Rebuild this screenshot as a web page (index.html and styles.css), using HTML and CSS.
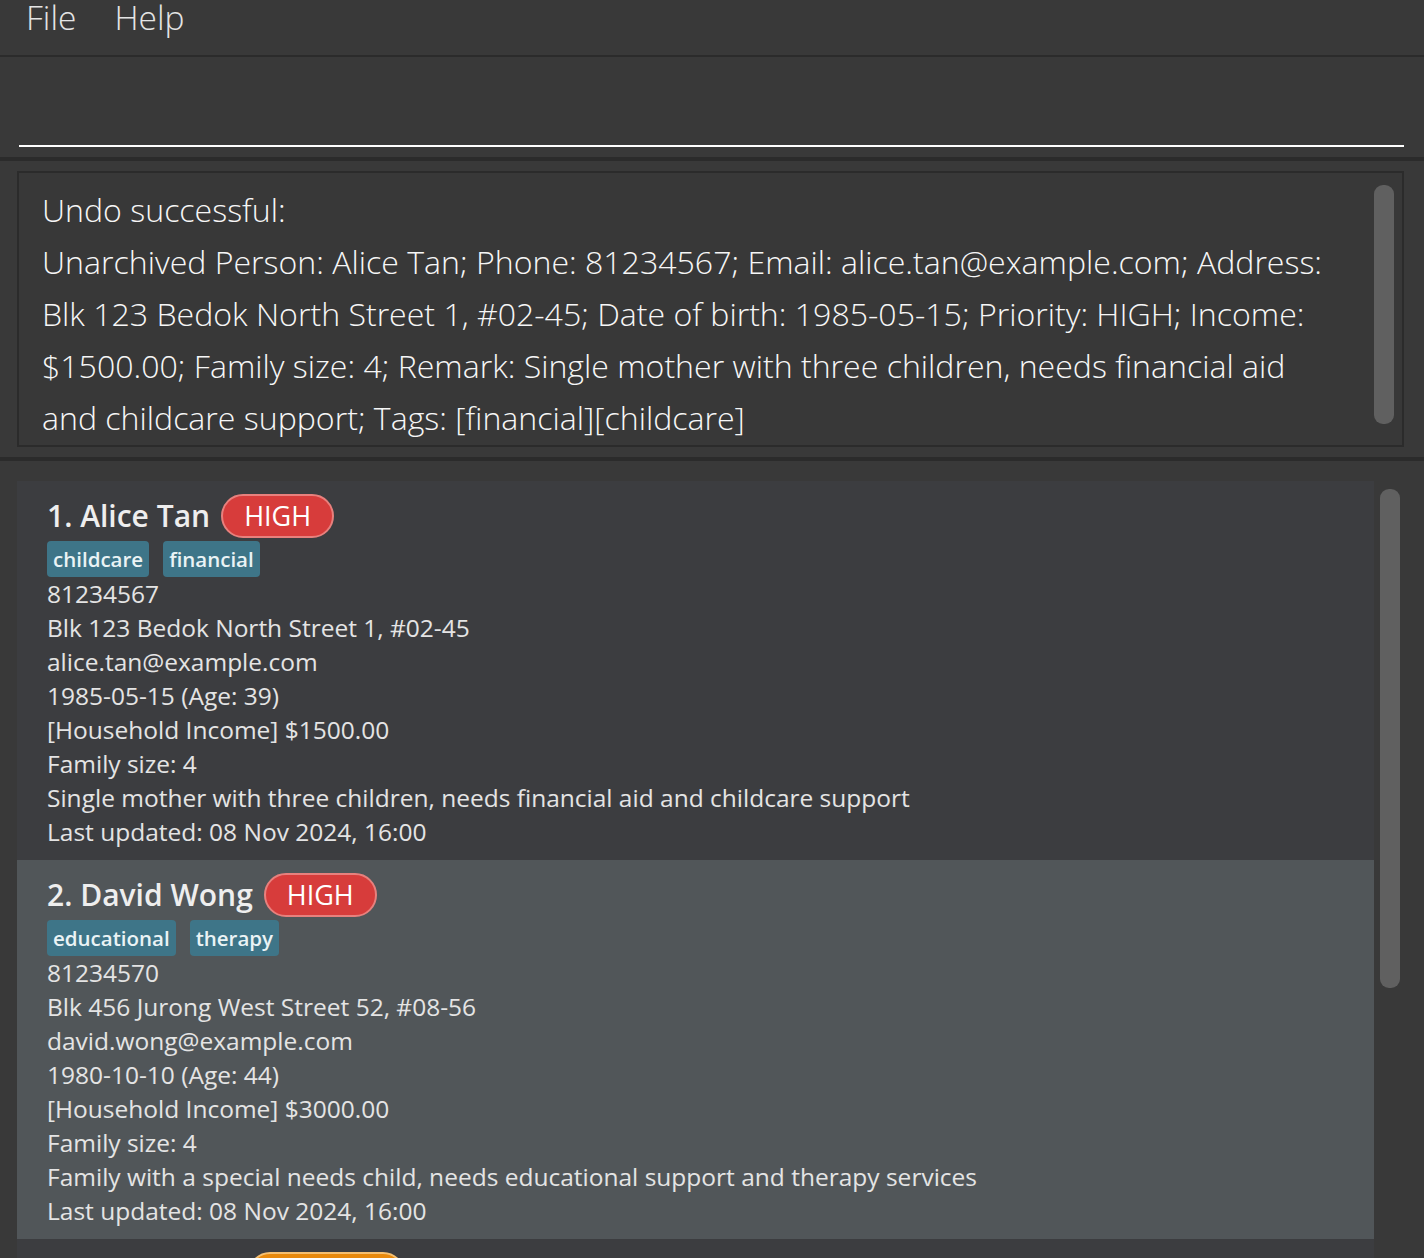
FILE: index.html
```html
<!DOCTYPE html>
<html lang="en">
<head>
<meta charset="utf-8">
<title>Address Book</title>
<link rel="stylesheet" href="styles.css">
</head>
<body>
<div class="app">
  <nav class="menubar">
    <span class="menu-item menu-file">File</span>
    <span class="menu-item">Help</span>
  </nav>
  <div class="sep sep-thin"></div>
  <section class="command">
    <div class="command-input"></div>
  </section>
  <div class="sep"></div>
  <section class="result">
    <div class="result-box">
      <div class="result-text">Undo successful:<br>Unarchived Person: Alice Tan; Phone: 81234567; Email: alice.tan@example.com; Address:<br>Blk 123 Bedok North Street 1, #02-45; Date of birth: 1985-05-15; Priority: HIGH; Income:<br>$1500.00; Family size: 4; Remark: Single mother with three children, needs financial aid<br>and childcare support; Tags: [financial][childcare]</div>
      <div class="thumb result-thumb"></div>
    </div>
  </section>
  <div class="sep"></div>
  <section class="list">
    <div class="cards">
      <article class="card card-odd">
        <div class="card-title">
          <span class="name">1. Alice Tan</span>
          <span class="badge badge-high">HIGH</span>
        </div>
        <div class="tags">
          <span class="tag">childcare</span>
          <span class="tag">financial</span>
        </div>
        <div class="line">81234567</div>
        <div class="line">Blk 123 Bedok North Street 1, #02-45</div>
        <div class="line">alice.tan@example.com</div>
        <div class="line">1985-05-15 (Age: 39)</div>
        <div class="line">[Household Income] $1500.00</div>
        <div class="line">Family size: 4</div>
        <div class="line">Single mother with three children, needs financial aid and childcare support</div>
        <div class="line">Last updated: 08 Nov 2024, 16:00</div>
      </article>
      <article class="card card-even">
        <div class="card-title">
          <span class="name">2. David Wong</span>
          <span class="badge badge-high">HIGH</span>
        </div>
        <div class="tags">
          <span class="tag">educational</span>
          <span class="tag">therapy</span>
        </div>
        <div class="line">81234570</div>
        <div class="line">Blk 456 Jurong West Street 52, #08-56</div>
        <div class="line">david.wong@example.com</div>
        <div class="line">1980-10-10 (Age: 44)</div>
        <div class="line">[Household Income] $3000.00</div>
        <div class="line">Family size: 4</div>
        <div class="line">Family with a special needs child, needs educational support and therapy services</div>
        <div class="line">Last updated: 08 Nov 2024, 16:00</div>
      </article>
      <article class="card card-odd">
        <div class="card-title">
          <span class="name">3. Rachel Lim</span>
          <span class="badge badge-medium">MEDIUM</span>
        </div>
      </article>
    </div>
    <div class="thumb list-thumb"></div>
  </section>
</div>
</body>
</html>
```
FILE: styles.css
```css
* { box-sizing: border-box; }
html, body {
  margin: 0;
  padding: 0;
  width: 1424px;
  height: 1258px;
  overflow: hidden;
  background: #393939;
  font-family: "Open Sans", "Noto Sans", sans-serif;
  color: #e6e6e6;
}
.app { display: flex; flex-direction: column; }

.menubar {
  height: 55px;
  display: flex;
  align-items: flex-start;
  padding-left: 26px;
  gap: 38px;
}
.menu-item {
  font-weight: 300;
  font-size: 33.5px;
  line-height: 34px;
  color: #e4e4e4;
}

.sep { height: 4px; background: #2b2b2b; }
.sep-thin { height: 2px; }

.command { height: 100px; padding: 0 20px 0 19px; }
.command-input { height: 90px; border-bottom: 2px solid #ffffff; }

.result { padding: 10px 20px 10px 17px; }
.result-box {
  height: 276px;
  border: 2px solid #2b2b2b;
  background: #383838;
  display: flex;
  padding: 11px 8px 0 23px;
}
.result-text {
  flex: 1;
  font-weight: 300;
  font-size: 32.1px;
  line-height: 52px;
  color: #f6f6f6;
  white-space: nowrap;
}
.thumb {
  width: 20px;
  border-radius: 9px;
  background: #606060;
  flex: none;
}
.result-thumb { height: 239px; margin-top: 1px; }

.list { display: flex; padding: 20px 0 0 17px; gap: 6px; }
.cards { width: 1357px; display: flex; flex-direction: column; }
.list-thumb { height: 499px; margin-top: 8px; }

.card { padding: 13px 20px 11px 30px; }
.card-odd { background: #3c3d40; }
.card-even { background: #515659; }

.card-title { height: 44px; display: flex; align-items: center; gap: 11px; }
.name {
  font-size: 30px;
  font-weight: 600;
  color: #eeeeee;
  line-height: 44px;
}
.badge {
  height: 44px;
  border-radius: 22px;
  padding: 0 21px;
  font-size: 27px;
  line-height: 40px;
  font-weight: 400;
  color: #ffffff;
}
.badge-high { background: #d73c3b; border: 2px solid #e8807d; }
.badge-medium { background: #e8890c; border: 2px solid #f5bf70; }

.tags { display: flex; gap: 14px; margin-top: 3px; height: 36px; }
.tag {
  height: 36px;
  line-height: 36px;
  padding: 0 6px;
  background: #3e7588;
  border-radius: 4px;
  font-size: 20.5px;
  font-weight: 600;
  color: #eaf3f5;
}
.line {
  font-size: 24.5px;
  line-height: 34px;
  color: #e4e4e4;
  white-space: nowrap;
}
```
